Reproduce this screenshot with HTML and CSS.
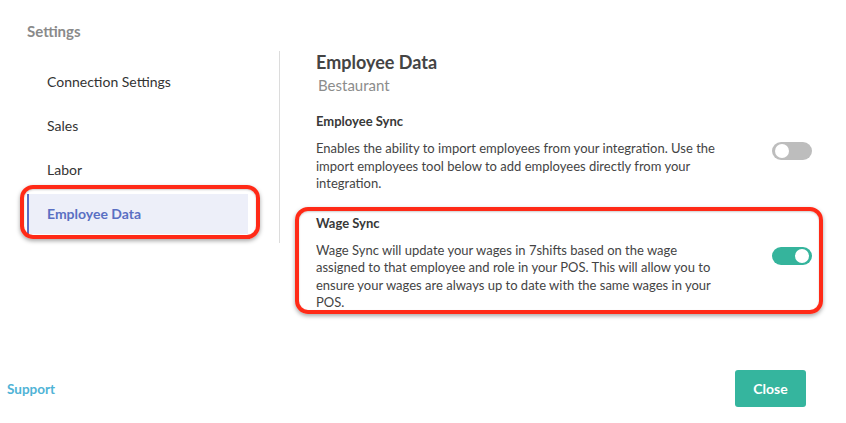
FILE: index.html
```html
<!DOCTYPE html>
<html>
<head>
<meta charset="utf-8">
<link rel="stylesheet" href="styles.css">
</head>
<body>
<div class="modal">
  <div class="title">Settings</div>
  <div class="body">
    <nav class="nav">
      <div class="nav-item">Connection Settings</div>
      <div class="nav-item">Sales</div>
      <div class="nav-item">Labor</div>
      <div class="nav-item active">Employee Data<span class="mark mark-left"></span></div>
    </nav>
    <div class="divider"></div>
    <main class="content">
      <h1 class="heading">Employee Data</h1>
      <div class="sub">Bestaurant</div>
      <section class="setting first">
        <h2 class="setting-title">Employee Sync</h2>
        <div class="setting-row">
          <p class="setting-desc">Enables the ability to import employees from your integration. Use the import employees tool below to add employees directly from your integration.</p>
          <span class="toggle"><span class="knob"></span></span>
        </div>
      </section>
      <section class="setting second">
        <span class="mark mark-right"></span>
        <h2 class="setting-title">Wage Sync</h2>
        <div class="setting-row">
          <p class="setting-desc">Wage Sync will update your wages in 7shifts based on the wage assigned to that employee and role in your POS. This will allow you to ensure your wages are always up to date with the same wages in your POS.</p>
          <span class="toggle on"><span class="knob"></span></span>
        </div>
      </section>
    </main>
  </div>
  <footer class="footer">
    <a class="support">Support</a>
    <button class="close">Close</button>
  </footer>
</div>
</body>
</html>
```

FILE: styles.css
```css
* { box-sizing: border-box; }
html, body { margin: 0; padding: 0; background: #fff; }
body {
  font-family: Lato, "Open Sans", Arial, sans-serif;
  color: #3d3d3d;
  width: 846px;
  height: 423px;
  overflow: hidden;
}
.modal {
  display: flex;
  flex-direction: column;
  height: 423px;
}
.title {
  font-size: 15px;
  line-height: 18px;
  font-weight: 700;
  color: #8a8a8a;
  padding: 22px 0 0 27px;
  height: 51px;
}
.body {
  display: flex;
  align-items: flex-start;
}
.nav {
  width: 221px;
  margin-left: 27px;
  padding-top: 11px;
  display: flex;
  flex-direction: column;
  gap: 4px;
}
.nav-item {
  position: relative;
  height: 40px;
  line-height: 40px;
  padding-left: 20px;
  font-size: 14px;
  color: #333;
}
.nav-item.active {
  background: #edeff9;
  border-left: 2px solid #5b6ec6;
  padding-left: 18px;
  color: #5a6fc3;
  font-weight: 700;
}
.divider {
  width: 1px;
  height: 192px;
  background: #dcdcdc;
  margin-left: 31px;
}
.content {
  margin-left: 36px;
  width: 496px;
}
.heading {
  margin: 0;
  font-size: 18px;
  line-height: 22px;
  font-weight: 700;
  color: #444;
}
.sub {
  margin: 3px 0 0 2px;
  font-size: 15px;
  line-height: 18px;
  color: #8c8c8c;
}
.setting { position: relative; }
.setting.first { margin-top: 18px; }
.setting.second { margin-top: 21px; }
.setting-title {
  margin: 0;
  font-size: 13px;
  line-height: 18px;
  font-weight: 700;
  color: #383838;
}
.setting-row {
  display: flex;
  align-items: flex-start;
  justify-content: space-between;
  margin-top: 10px;
}
.setting-desc {
  margin: 0;
  width: 408px;
  font-size: 13px;
  line-height: 17.5px;
  color: #444;
}
.toggle {
  position: relative;
  flex: none;
  width: 40px;
  height: 18px;
  border-radius: 9px;
  background: #bdbdbd;
  margin: 2px 0 0 0;
}
.toggle .knob {
  position: absolute;
  top: 2px;
  left: 3px;
  width: 14px;
  height: 14px;
  border-radius: 50%;
  background: #fff;
}
.toggle.on { background: #35b49c; margin-top: 5px; }
.toggle.on .knob { left: auto; right: 3px; }
.mark {
  position: absolute;
  border: 4px solid #ff2a17;
  border-radius: 13px;
  box-shadow: 0 2px 4px rgba(0,0,0,0.35), inset 0 1px 2px rgba(0,0,0,0.2);
  pointer-events: none;
}
.mark-left {
  left: -9px;
  top: -9px;
  width: 240px;
  height: 54px;
}
.mark-right {
  left: -21px;
  top: -7px;
  width: 528px;
  height: 107px;
}
.footer {
  margin-top: auto;
  display: flex;
  align-items: center;
  justify-content: space-between;
  padding: 0 40px 16px 7px;
}
.support {
  font-size: 13.5px;
  font-weight: 700;
  color: #4fb3d6;
}
.close {
  width: 71px;
  height: 37px;
  border: none;
  border-radius: 3px;
  background: #35b59e;
  color: #fff;
  font-family: inherit;
  font-size: 14px;
  font-weight: 700;
}
```
